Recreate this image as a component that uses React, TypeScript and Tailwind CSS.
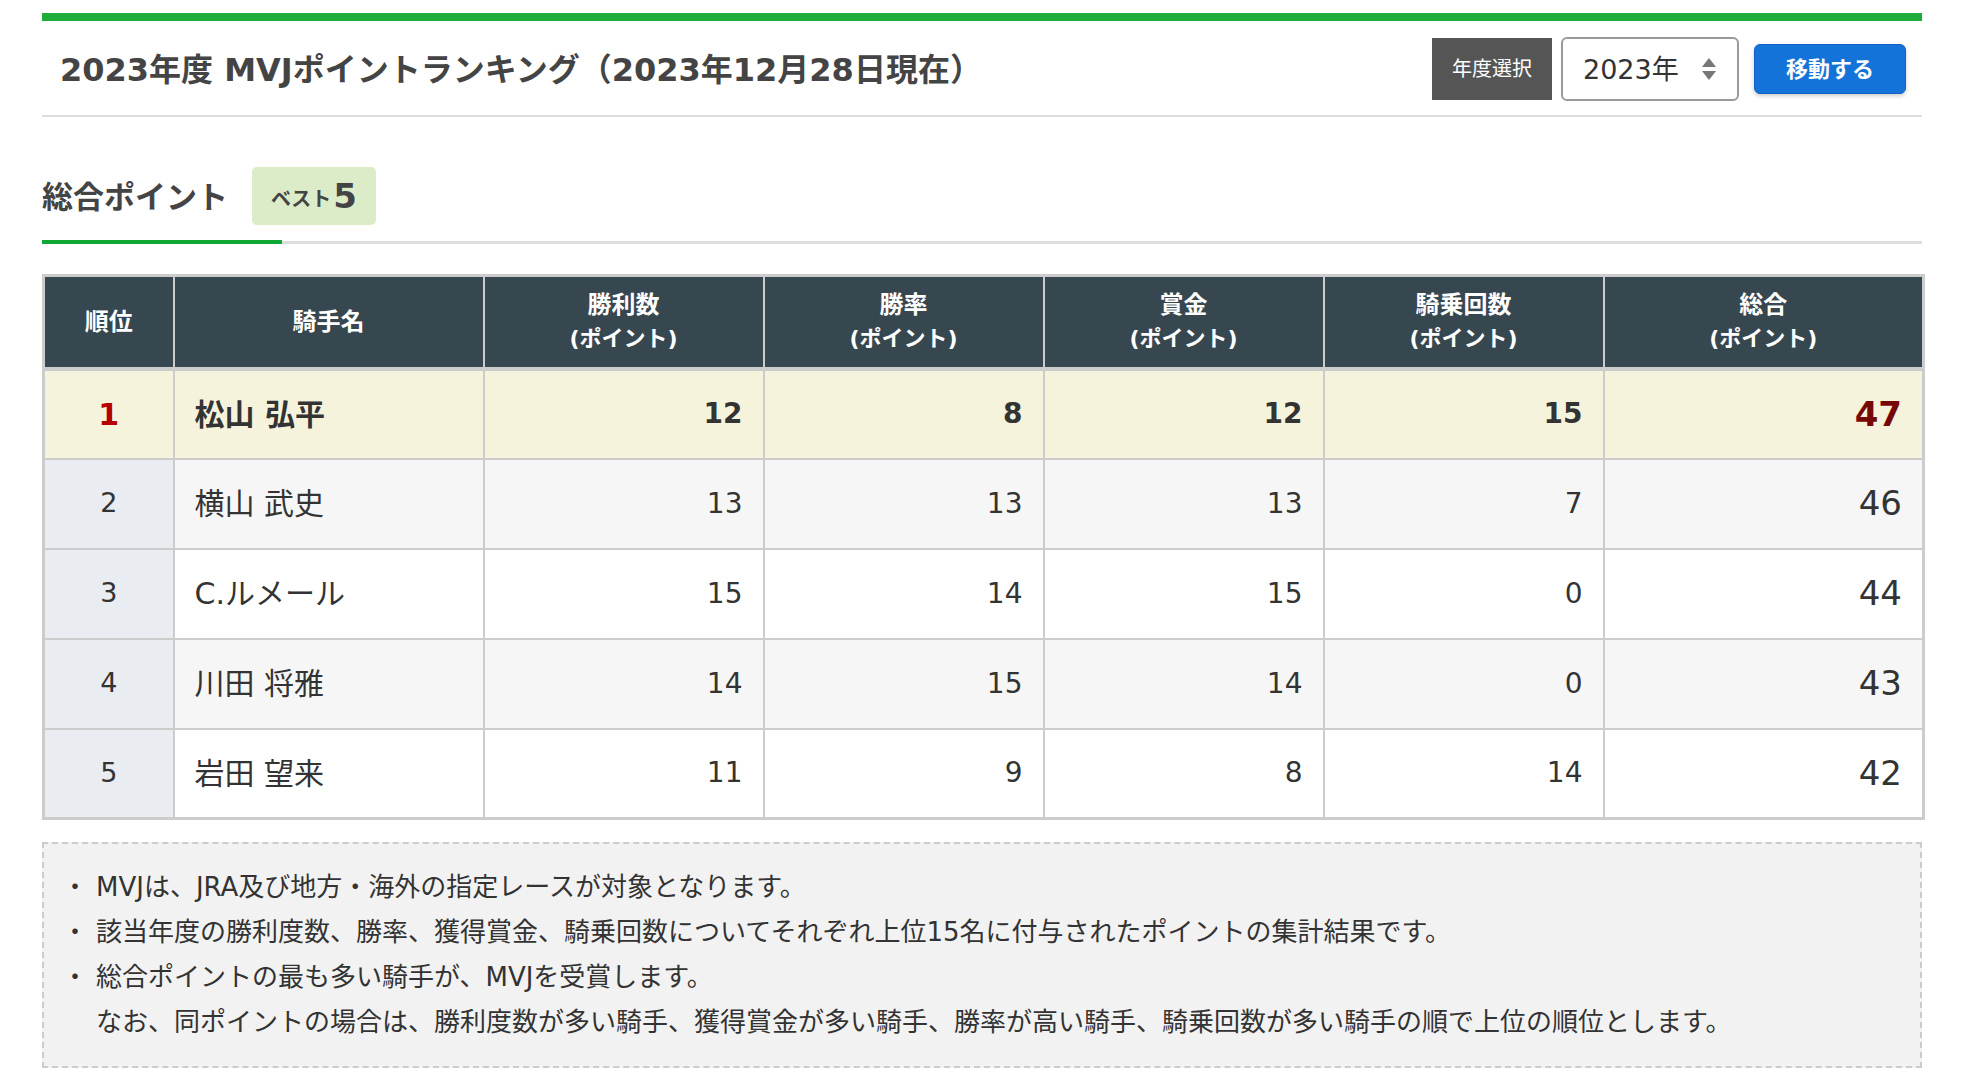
import React from "react";

const rows = [
  { rank: 1, name: "松山 弘平", a: 12, b: 8, c: 12, d: 15, t: 47 },
  { rank: 2, name: "横山 武史", a: 13, b: 13, c: 13, d: 7, t: 46 },
  { rank: 3, name: "C.ルメール", a: 15, b: 14, c: 15, d: 0, t: 44 },
  { rank: 4, name: "川田 将雅", a: 14, b: 15, c: 14, d: 0, t: 43 },
  { rank: 5, name: "岩田 望来", a: 11, b: 9, c: 8, d: 14, t: 42 },
];

const heads = ["勝利数", "勝率", "賞金", "騎乗回数", "総合"];

function SelectArrows() {
  return (
    <svg width="16" height="24" viewBox="0 0 16 24" className="shrink-0">
      <polygon points="8,1 15,10 1,10" fill="#777" />
      <polygon points="1,14 15,14 8,23" fill="#777" />
    </svg>
  );
}

export default function App() {
  return (
    <div className="min-h-[1086px] bg-white pt-[13px] pl-[42px] text-[#333] font-['DejaVu_Sans','Noto_Sans_CJK_JP',sans-serif]">
      <div className="w-[1880px]">
        <div className="h-[8px] bg-[#1fac3b]" />
        {/* header */}
        <div className="flex h-[96px] items-center justify-between border-b-2 border-[#dddddd] pl-[18px] pr-[16px]">
          <h1 className="pt-[4px] text-[32px] font-bold leading-none text-[#444]">
            2023年度 MVJポイントランキング（2023年12月28日現在）
          </h1>
          <div className="flex items-center pt-[2px]">
            <div className="flex h-[62px] w-[120px] items-center justify-center bg-[#555555] text-[20px] text-white">
              年度選択
            </div>
            <div className="ml-[9px] flex h-[64px] w-[178px] items-center justify-between rounded-[6px] border-2 border-[#9a9a9a] bg-white pl-[20px] pr-[20px]">
              <span className="text-[27px] leading-none text-[#333]">2023年</span>
              <SelectArrows />
            </div>
            <button className="ml-[15px] flex h-[50px] w-[152px] items-center justify-center rounded-[6px] border border-[#1262c4] bg-[#1473d8] text-[22px] font-bold text-white shadow-[0_2px_4px_rgba(0,0,0,0.2)]">
              移動する
            </button>
          </div>
        </div>

        {/* section heading */}
        <div className="mt-[50px] flex h-[58px] items-center">
          <h2 className="pt-[2px] text-[31px] font-bold leading-none text-[#444]">総合ポイント</h2>
          <div className="ml-[24px] flex h-[58px] w-[124px] items-center justify-center rounded-[5px] bg-[#dcecc9] text-[#444]">
            <span className="pt-[6px] text-[20px] font-bold">ベスト</span>
            <span className="ml-[2px] text-[34px] font-bold leading-none">5</span>
          </div>
        </div>
        <div className="mt-[15px] flex items-end">
          <div className="h-[4px] w-[240px] bg-[#10a834]" />
          <div className="h-[3px] flex-1 bg-[#dddddd]" />
        </div>

        {/* table */}
        <table className="mt-[30px] w-[1880px] table-fixed border-collapse border-[3px] border-[#cccccc]">
          <colgroup>
            <col className="w-[130px]" />
            <col className="w-[310px]" />
            <col className="w-[280px]" />
            <col className="w-[280px]" />
            <col className="w-[280px]" />
            <col className="w-[280px]" />
            <col className="w-[320px]" />
          </colgroup>
          <thead>
            <tr className="h-[93px] bg-[#37474f] text-white">
              <th className="border-2 border-b-[4px] border-[#cccccc] text-[24px] font-bold">順位</th>
              <th className="border-2 border-b-[4px] border-[#cccccc] text-[24px] font-bold">騎手名</th>
              {heads.map((h) => (
                <th key={h} className="border-2 border-b-[4px] border-[#cccccc] font-bold">
                  <div className="text-[24px] leading-[34px]">{h}</div>
                  <div className="text-[22px] leading-[34px]">(ポイント)</div>
                </th>
              ))}
            </tr>
          </thead>
          <tbody>
            {rows.map((r) => {
              const first = r.rank === 1;
              const rowBg = first ? "bg-[#f6f3dd]" : r.rank % 2 === 0 ? "bg-[#f6f6f6]" : "bg-white";
              const rankBg = first ? "bg-[#f6f3dd]" : "bg-[#e9edf1]";
              const numCls = first
                ? "border-2 border-[#cccccc] pr-[20px] text-right text-[28px] font-bold"
                : "border-2 border-[#cccccc] pr-[20px] text-right text-[28px]";
              return (
                <tr key={r.rank} className={`h-[90px] ${rowBg}`}>
                  <td
                    className={`border-2 border-[#cccccc] text-center text-[27px] ${rankBg} ${
                      first ? "font-bold text-[#b40000] text-[30px]" : ""
                    }`}
                  >
                    {r.rank}
                  </td>
                  <td className={`border-2 border-[#cccccc] pl-[20px] text-[30px] ${first ? "font-bold" : ""}`}>
                    {r.name}
                  </td>
                  <td className={numCls}>{r.a}</td>
                  <td className={numCls}>{r.b}</td>
                  <td className={numCls}>{r.c}</td>
                  <td className={numCls}>{r.d}</td>
                  <td
                    className={`border-2 border-[#cccccc] pr-[20px] text-right text-[34px] ${
                      first ? "font-bold text-[#760808]" : ""
                    }`}
                  >
                    {r.t}
                  </td>
                </tr>
              );
            })}
          </tbody>
        </table>

        {/* notes */}
        <div className="mt-[22px] border-2 border-dashed border-[#cccccc] bg-[#f2f2f2] pt-[21px] pb-[21px] pl-[18px] text-[26px] leading-[45px] text-[#333]">
          <div className="flex">
            <span className="w-[26px] text-center">・</span>
            <span className="ml-[8px]">MVJは、JRA及び地方・海外の指定レースが対象となります。</span>
          </div>
          <div className="flex">
            <span className="w-[26px] text-center">・</span>
            <span className="ml-[8px]">
              該当年度の勝利度数、勝率、獲得賞金、騎乗回数についてそれぞれ上位15名に付与されたポイントの集計結果です。
            </span>
          </div>
          <div className="flex">
            <span className="w-[26px] text-center">・</span>
            <span className="ml-[8px]">総合ポイントの最も多い騎手が、MVJを受賞します。</span>
          </div>
          <div className="pl-[34px]">
            なお、同ポイントの場合は、勝利度数が多い騎手、獲得賞金が多い騎手、勝率が高い騎手、騎乗回数が多い騎手の順で上位の順位とします。
          </div>
        </div>
      </div>
    </div>
  );
}
